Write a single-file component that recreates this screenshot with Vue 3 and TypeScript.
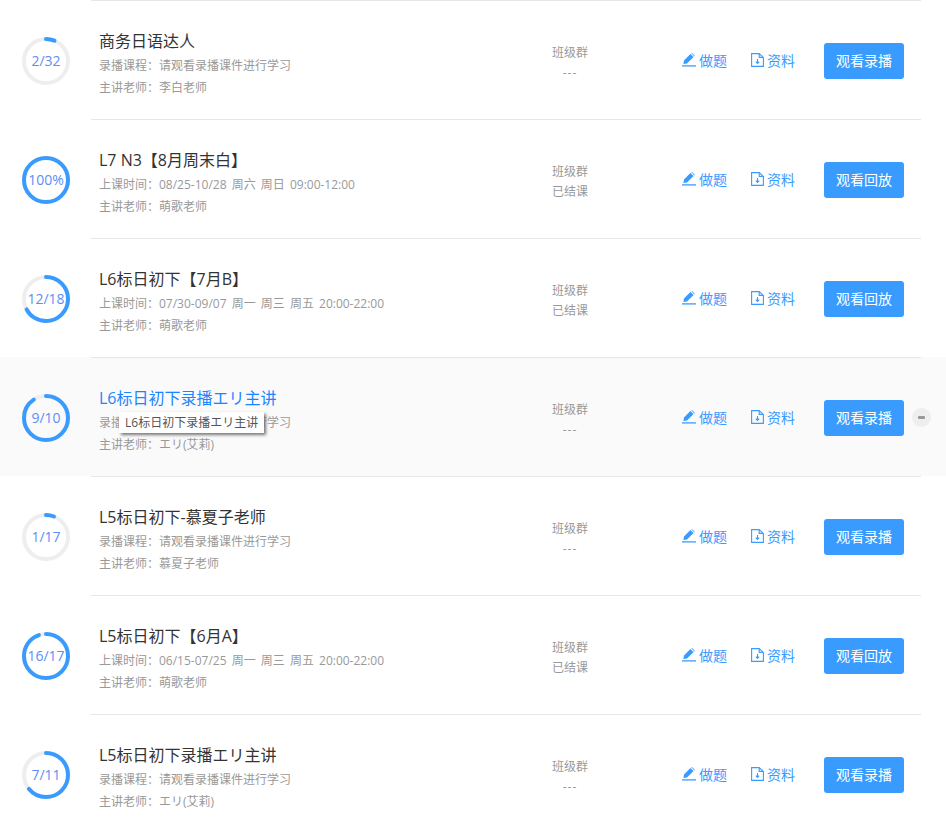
<script setup lang="ts">
interface Course {
  title: string
  desc: string
  teacher: string
  label: string
  done: number
  total: number
  status: string
  action: string
}

const REC = '录播课程\uFF1A请观看录播课件进行学习'
const TIME = '上课时间\uFF1A'
const TEACHER = '主讲老师\uFF1A'

const courses: Course[] = [
  { title: '商务日语达人', desc: REC, teacher: '李白老师', label: '2/32', done: 2, total: 32, status: '---', action: '观看录播' },
  { title: 'L7 N3【8月周末白】', desc: TIME + '08/25-10/28 周六 周日 09:00-12:00', teacher: '萌歌老师', label: '100%', done: 1, total: 1, status: '已结课', action: '观看回放' },
  { title: 'L6标日初下【7月B】', desc: TIME + '07/30-09/07 周一 周三 周五 20:00-22:00', teacher: '萌歌老师', label: '12/18', done: 12, total: 18, status: '已结课', action: '观看回放' },
  { title: 'L6标日初下录播エリ主讲', desc: REC, teacher: 'エリ(艾莉)', label: '9/10', done: 9, total: 10, status: '---', action: '观看录播' },
  { title: 'L5标日初下-慕夏子老师', desc: REC, teacher: '慕夏子老师', label: '1/17', done: 1, total: 17, status: '---', action: '观看录播' },
  { title: 'L5标日初下【6月A】', desc: TIME + '06/15-07/25 周一 周三 周五 20:00-22:00', teacher: '萌歌老师', label: '16/17', done: 16, total: 17, status: '已结课', action: '观看回放' },
  { title: 'L5标日初下录播エリ主讲', desc: REC, teacher: 'エリ(艾莉)', label: '7/11', done: 7, total: 11, status: '---', action: '观看录播' },
]

const hovered = 3
const R = 22
const CIRC = 2 * Math.PI * R

function dash(c: Course): string {
  return `${(c.done / c.total) * CIRC} ${CIRC}`
}
</script>

<template>
  <div class="page">
    <div v-for="(c, i) in courses" :key="c.title" class="row" :class="{ hover: i === hovered }">
      <div class="progress">
        <svg width="48" height="48" viewBox="0 0 48 48">
          <circle class="track" cx="24" cy="24" :r="R" />
          <circle class="bar" cx="24" cy="24" :r="R" :stroke-dasharray="dash(c)" transform="rotate(-90 24 24)" />
        </svg>
        <span class="label">{{ c.label }}</span>
      </div>
      <div class="body">
        <div class="info">
          <div class="title">{{ c.title }}</div>
          <div class="meta">{{ c.desc }}</div>
          <div class="meta">{{ TEACHER + c.teacher }}</div>
          <div v-if="i === hovered" class="tooltip">{{ c.title }}</div>
        </div>
        <div class="group">
          <div>班级群</div>
          <div :class="{ dashes: c.status === '---' }">{{ c.status }}</div>
        </div>
        <div class="links">
          <a class="link">
            <svg width="14" height="14" viewBox="0 0 14 14">
              <path d="M1.4 11 2 7.4 8.4.9 11.6 4.1 5 10.4Z M9.3.3 10 0 12.8 2.7 12.4 3.4Z" fill="#3a9bff" />
              <path d="M0 12.9H14" stroke="#3a9bff" stroke-width="1.3" fill="none" />
            </svg>
            做题
          </a>
          <a class="link">
            <svg width="13" height="14" viewBox="0 0 13 14" fill="none" stroke="#3a9bff" stroke-width="1.1">
              <path d="M.6.6H8.2L12.4 4.4V13.4H.6Z M8.2.6V4.4H12.4" />
              <path d="M6.5 6V10 M4.8 8.6 6.5 10.4 8.2 8.6" stroke-width="1.1" />
            </svg>
            资料
          </a>
        </div>
        <button class="watch">{{ c.action }}</button>
      </div>
      <span v-if="i === hovered" class="remove"><i></i></span>
    </div>
  </div>
</template>

<style>
html, body {
  overflow: hidden;
  background: #fff;
}
</style>

<style scoped>
.page {
  height: 817px;
  overflow: hidden;
  font-family: "Open Sans", "Noto Sans CJK SC", sans-serif;
}
.row {
  position: relative;
  display: flex;
  height: 119px;
}
.row.hover {
  background: #fafafa;
}
.progress {
  position: relative;
  flex: none;
  width: 48px;
  height: 48px;
  margin: 37px 21px 0 22px;
}
.progress svg {
  display: block;
}
.track,
.bar {
  fill: none;
  stroke-width: 4;
}
.track {
  stroke: #eee;
}
.bar {
  stroke: #3a9bff;
  stroke-linecap: round;
}
.label {
  position: absolute;
  inset: 0;
  padding-bottom: 2px;
  display: flex;
  align-items: center;
  justify-content: center;
  font-size: 14px;
  color: #5f8df5;
}
.body {
  flex: none;
  width: 830px;
  box-sizing: border-box;
  display: flex;
  align-items: flex-start;
  border-top: 1px solid #e6e6e6;
}
.info {
  position: relative;
  flex: none;
  width: 431px;
  padding: 28px 0 0 8px;
}
.title {
  font-size: 16px;
  line-height: 24px;
  color: #333;
  margin-bottom: 2px;
}
.hover .title {
  color: #1a85ff;
}
.meta {
  font-size: 12px;
  line-height: 22px;
  color: #999;
  word-spacing: 2px;
}
.tooltip {
  position: absolute;
  left: 28px;
  top: 54px;
  padding: 0 6px;
  font-size: 12px;
  line-height: 21px;
  color: #555;
  background: #fff;
  box-shadow: 2px 2px 3px #777;
}
.group {
  flex: none;
  width: 80px;
  padding-top: 42px;
  font-size: 12px;
  line-height: 20px;
  color: #999;
  text-align: center;
}
.dashes {
  letter-spacing: 1px;
}
.links {
  flex: none;
  display: flex;
  gap: 24px;
  margin-left: 72px;
  padding-top: 50px;
}
.link {
  display: flex;
  align-items: center;
  gap: 3px;
  font-size: 14px;
  line-height: 20px;
  color: #3a9bff;
}
.link svg {
  margin-bottom: 2px;
}
.watch {
  flex: none;
  width: 80px;
  height: 36px;
  margin: 42px 17px 0 auto;
  padding: 0 0 2px;
  border: 0;
  border-radius: 3px;
  font-family: inherit;
  font-size: 14px;
  color: #fff;
  background: #3a9bff;
}
.remove {
  position: absolute;
  left: 912px;
  top: 51px;
  width: 19px;
  height: 19px;
  border-radius: 50%;
  background: #eee;
  display: flex;
  align-items: center;
  justify-content: center;
}
.remove i {
  width: 7px;
  height: 3px;
  border-radius: 1px;
  background: #999;
}
</style>
